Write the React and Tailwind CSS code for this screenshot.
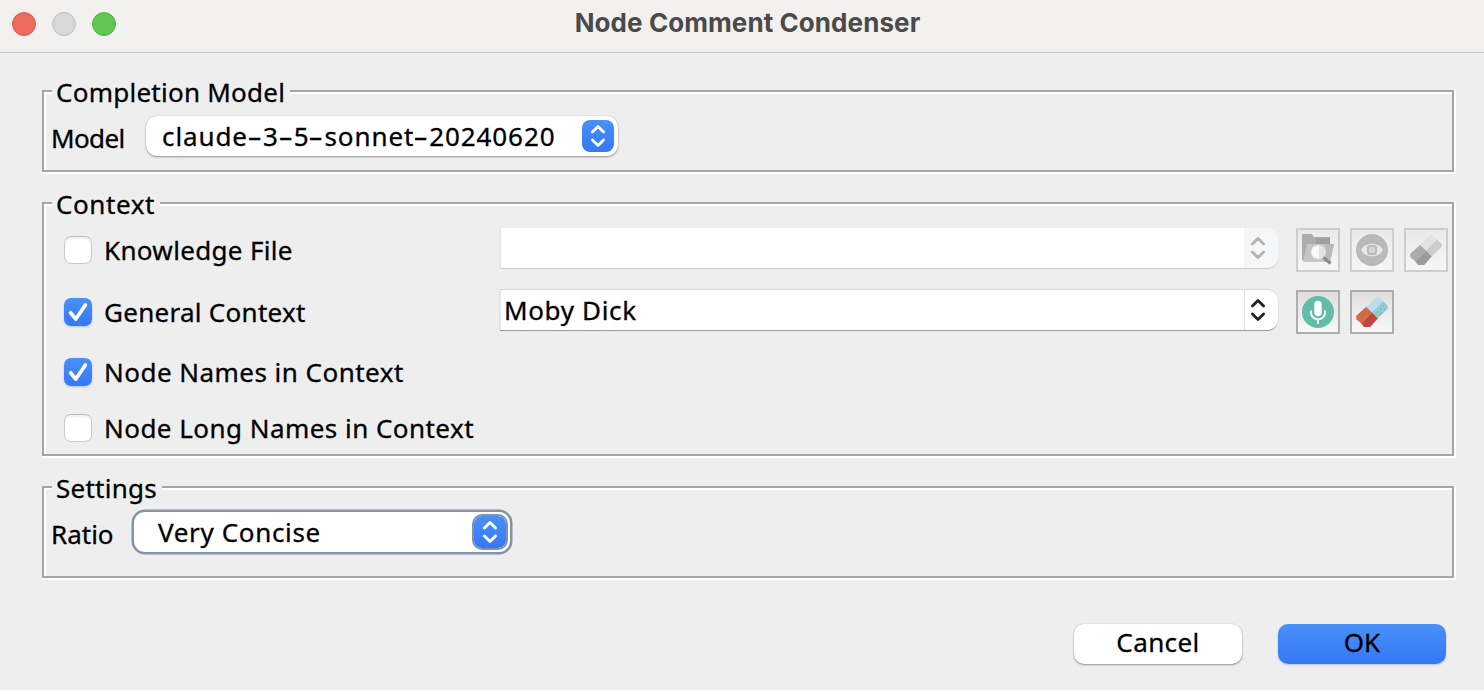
import clsx from 'clsx';

const Chevrons = ({ color = '#ffffff', width = 2.8 }) => (
  <svg width="16" height="24" viewBox="0 0 16 24" fill="none" stroke={color} strokeWidth={width} strokeLinecap="round" strokeLinejoin="round">
    <path d="M2.4 8 L8 2.4 L13.6 8" />
    <path d="M2.4 16 L8 21.6 L13.6 16" />
  </svg>
);

const Group = ({ title, titleClass, className, children }) => (
  <section
    className={clsx(
      'border-2 border-[#a5a5a5] shadow-[2px_0_0_#fff,0_2px_0_#fff,2px_2px_0_#fff,inset_2px_2px_0_#fff]',
      className
    )}
  >
    <h2 className={clsx('-mt-[14px] ml-2 h-7 whitespace-nowrap bg-[#eeeeee] pl-1 leading-7', titleClass)}>
      {title}
    </h2>
    {children}
  </section>
);

const Checkbox = ({ label, checked, labelClass }) => (
  <label className="flex h-7 items-center gap-3 whitespace-nowrap leading-7">
    {checked ? (
      <span className="flex h-7 w-7 items-center justify-center rounded-[7px] bg-linear-to-b from-[#4a90f8] to-[#3478f6] shadow-[0_1px_2px_#3478f655]">
        <svg width="28" height="28" viewBox="0 0 28 28" fill="none" stroke="#fff" strokeWidth="3.7" strokeLinecap="round" strokeLinejoin="round">
          <path d="M6.6 14.8 L11.8 21 L21.4 7" />
        </svg>
      </span>
    ) : (
      <span className="h-7 w-7 rounded-[7px] border border-[#cbcbcb] border-t-[#bdbdbd] bg-white shadow-[inset_0_2px_2px_#0000000f]" />
    )}
    <span className={labelClass}>{label}</span>
  </label>
);

const Combo = ({ value, disabled }) => (
  <div
    className={clsx(
      'flex h-10 w-[778px] self-start rounded-r-[11px] leading-10',
      disabled ? 'shadow-[0_1px_1px_#00000028]' : 'shadow-[0_1px_1px_#00000060,0_-1px_0_#00000018]'
    )}
  >
    <div className="flex-1 border-l border-[#e4e4e4] bg-white pl-[3px] tracking-[0.65px]">{value}</div>
    <div
      className={clsx(
        'flex w-[34px] items-center rounded-r-[11px] border-l pl-[5px]',
        disabled ? 'border-[#f6f6f6] bg-[#f5f6f7]' : 'border-[#dedede] bg-white'
      )}
    >
      <Chevrons color={disabled ? '#b3b3b3' : '#232323'} />
    </div>
  </div>
);

// the hyphens of a model id are drawn as wide as a digit
const ModelName = ({ name }) => (
  <span className="whitespace-nowrap tracking-[0.9px]">
    {name.split(/(-)/).map((part, i) =>
      part === '-' ? (
        <span key={i} className="inline-block w-[15px] scale-x-[1.7] text-center">-</span>
      ) : (
        part
      )
    )}
  </span>
);

const IconButton = ({ disabled, children }) => (
  <button
    className={clsx(
      'flex h-11 w-11 items-center justify-center border-2 bg-linear-to-b',
      disabled ? 'border-[#cecece] from-[#e9e9e9] to-[#f6f6f6]' : 'border-[#aeaeae] from-[#dedede] to-[#f8f8f8]'
    )}
  >
    {children}
  </button>
);

const FolderSearchIcon = () => (
  <svg width="32" height="32" viewBox="0 0 32 32">
    <path d="M0 0h10l2 3h16v23H0z" fill="#adadad" />
    <path d="M14 4h14v6H14z" fill="#9f9f9f" />
    <path d="M5 10h27l-4 18H1z" fill="#c6c6c6" />
    <path d="M24 10h8l-4 18h-4z" fill="#b9b9b9" />
    <path d="M21.5 23.5l7 6" stroke="#8a8a8a" strokeWidth="3" />
    <circle cx="16" cy="18" r="7.5" fill="#d9d9d9" />
    <circle cx="16" cy="18" r="6.6" fill="#fafafa" />
    <path d="M17 11.4a6.6 6.6 0 0 1 0 13.2z" fill="#e2e2e2" />
  </svg>
);

const EyeIcon = () => (
  <svg width="32" height="32" viewBox="0 0 32 32">
    <circle cx="16" cy="16" r="16" fill="#b9b9b9" />
    <path d="M5 16C8.5 7.6 23.5 7.6 27 16C23.5 24.4 8.5 24.4 5 16z" fill="#e6e6e6" />
    <rect x="12" y="12" width="8" height="8" rx="2" fill="#d6d6d6" stroke="#bababa" strokeWidth="2" />
  </svg>
);

const MicIcon = () => (
  <svg width="32" height="32" viewBox="0 0 32 32">
    <circle cx="16" cy="16" r="16" fill="#62bca7" />
    <rect x="12.3" y="4.8" width="7.4" height="15.4" rx="3.7" fill="#fff" />
    <path d="M9 14.5v2a7 7 0 0 0 14 0v-2M16 23.5v4.5" fill="none" stroke="#fff" strokeWidth="1.9" />
  </svg>
);

const EraserIcon = ({ colors, dots }) => (
  <svg width="32" height="32" viewBox="0 0 32 32">
    <path d="M10 11L19.5 1.8q2-1.6 4 0L27 5.3L16 16.6z" fill={colors[0]} />
    <path d="M16 16.6L27 5.3L31.4 9.4q1.2 1.6 0 3.6L21.8 22.4z" fill={colors[1]} />
    <path d="M10 11L16 16.6L5.2 27.6L0.6 23.4q-1-2 0-4z" fill={colors[2]} />
    <path d="M16 16.6L21.8 22.4L14.2 31H8L5.2 27.6z" fill={colors[3]} />
    {dots && <path d="M21 16h1M24 13h1M27 10h1M25 17h1M28 13h1M23 19h1" stroke="#5b9fe0" strokeWidth="1" />}
  </svg>
);

const grays = ['#e2e2e2', '#cdcdcd', '#ababab', '#9b9b9b'];
const colors = ['#b9dcf0', '#92cbd0', '#cf6d42', '#c2463e'];

const App = () => (
  <div className="h-[690px] w-[1484px] overflow-hidden bg-[#eeeeee] font-['Noto_Sans',sans-serif] text-[26px] text-black [-webkit-text-stroke:0.3px]">
    {/* Title bar */}
    <header className="grid h-[53px] grid-cols-[1fr_auto_1fr] border-b border-[#c9c8c7] bg-[#f2f1ef]">
      <div className="flex gap-4 pl-3 pt-3">
        <span className="h-6 w-6 rounded-full border border-[#d65a4d] bg-[#ed6a5f]" />
        <span className="h-6 w-6 rounded-full border border-[#bcbebe] bg-[#d7d9d9]" />
        <span className="h-6 w-6 rounded-full border border-[#55aa45] bg-[#62c655]" />
      </div>
      <h1 className="pl-[11px] font-['Inter',sans-serif] text-[26px] font-bold leading-[46px] tracking-[0.08px] text-[#4a4a4a] [-webkit-text-stroke:0]">
        Node Comment Condenser
      </h1>
    </header>

    <main className="pl-[42px] pr-[30px] pt-[37px]">
      <Group title="Completion Model" titleClass="w-[238px] tracking-[0.25px]" className="h-[82px]">
        <div className="flex pl-[7px] pt-[10px]">
          <span className="mt-2 w-[95px] leading-7 tracking-[-0.6px]">Model</span>
          <div className="flex h-10 w-[472px] items-center justify-between rounded-[11px] bg-white pl-4 pr-1 shadow-[0_1px_2px_#00000060,0_0_1px_#00000040]">
            <ModelName name="claude-3-5-sonnet-20240620" />
            <span className="flex h-8 w-8 items-center justify-center rounded-[8px] bg-linear-to-b from-[#4a90f8] to-[#3478f6]">
              <Chevrons />
            </span>
          </div>
        </div>
      </Group>

      <Group title="Context" titleClass="w-[108px] tracking-[0.6px]" className="mt-[30px] h-[254px]">
        <div className="flex flex-col pl-5 pt-[10px]">
          <div className="flex h-11 items-center">
            <div className="w-[436px]">
              <Checkbox label="Knowledge File" labelClass="tracking-[0.33px]" />
            </div>
            <Combo disabled />
            <div className="ml-[18px] flex gap-[10px]">
              <IconButton disabled><FolderSearchIcon /></IconButton>
              <IconButton disabled><EyeIcon /></IconButton>
              <IconButton disabled><EraserIcon colors={grays} /></IconButton>
            </div>
          </div>
          <div className="mt-[18px] flex h-11 items-center">
            <div className="w-[436px]">
              <Checkbox label="General Context" labelClass="tracking-[0.28px]" checked />
            </div>
            <Combo value="Moby Dick" />
            <div className="ml-[18px] flex gap-[10px]">
              <IconButton><MicIcon /></IconButton>
              <IconButton><EraserIcon colors={colors} dots /></IconButton>
            </div>
          </div>
          <div className="mt-6">
            <Checkbox label="Node Names in Context" labelClass="tracking-[0.47px]" checked />
          </div>
          <div className="mt-7">
            <Checkbox label="Node Long Names in Context" labelClass="tracking-[0.46px]" />
          </div>
        </div>
      </Group>

      <Group title="Settings" titleClass="w-[110px] tracking-[0.25px]" className="mt-[30px] h-[92px]">
        <div className="flex pl-[7px] pt-[10px]">
          <span className="mt-2 w-[83px] leading-7 tracking-[0px]">Ratio</span>
          <div className="flex h-10 w-[376px] items-center justify-between rounded-[11px] bg-white pl-6 pr-1 shadow-[0_0_0_2.5px_#8293a8]">
            <span className="tracking-[0.65px]">Very Concise</span>
            <span className="flex h-8 w-8 items-center justify-center rounded-[8px] bg-linear-to-b from-[#4a90f8] to-[#3478f6] shadow-[0_0_0_2px_#8293a8]">
              <Chevrons />
            </span>
          </div>
        </div>
      </Group>
    </main>

    <footer className="mt-[46px] flex justify-end gap-9 pr-[38px]">
      <button className="h-10 w-[168px] rounded-[10px] bg-white pb-1 leading-9 tracking-[0.4px] shadow-[0_1px_2px_#00000060,0_0_1px_#00000040]">
        Cancel
      </button>
      <button className="h-10 w-[168px] rounded-[10px] bg-linear-to-b from-[#4a90f8] to-[#3478f6] pb-1 leading-9 shadow-[0_1px_2px_#3478f655]">
        OK
      </button>
    </footer>
  </div>
);

export default App;
